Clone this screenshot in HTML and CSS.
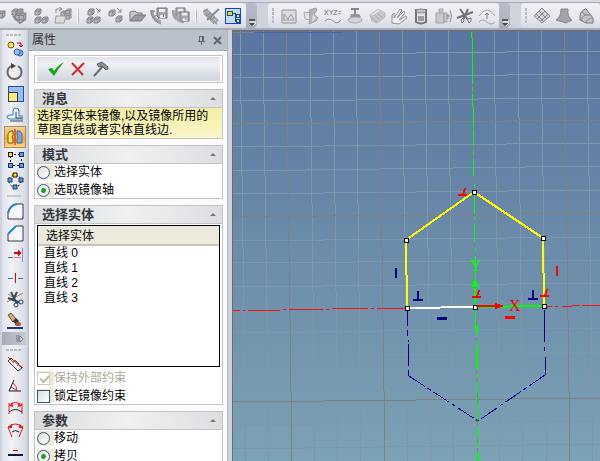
FILE: index.html
```html
<!DOCTYPE html>
<html lang="zh-CN">
<head>
<meta charset="utf-8">
<title>属性</title>
<link rel="stylesheet" href="styles.css">
</head>
<body>
<svg class="defs" aria-hidden="true">
  <symbol id="cube" viewBox="0 0 8 8"><path d="M1 3l2-2h4v4l-2 2H1z" fill="#b5b5ba" stroke="#858589"/><path d="M1 3h4v4M5 3l2-2" fill="none" stroke="#858589"/></symbol>
  <symbol id="disk" viewBox="0 0 12 12"><path d="M1 1h10v10H3L1 9z" fill="#a5a5aa" stroke="#77777c"/><path d="M3 2h6v3H3zM4 8h5v3H4z" fill="#ececf0"/><path d="M7 8h1v2H7z" fill="#77777c"/></symbol>
  <symbol id="more" viewBox="0 0 11 26"><path d="M3 17h6" stroke="#55585f" stroke-width="2"/><path d="M4 19h6" stroke="#fff"/><path d="M3 20h6l-3 3z" fill="#44474e"/><path d="M7 23l3-3" stroke="#fff"/></symbol>
</svg>

<header class="topbar">
  <div class="group group-first">
    <button aria-label="装配"><svg viewBox="0 0 18 18"><use href="#cube" x="9" y="3" width="9" height="9"/></svg></button>
    <button aria-label="零件组"><svg viewBox="0 0 18 18"><use href="#cube" x="1" y="1" width="8" height="8"/><use href="#cube" x="6" y="1" width="8" height="8"/><use href="#cube" x="4" y="5" width="9" height="9"/><use href="#cube" x="8" y="5" width="9" height="9"/><path d="M3 9l7 7 6-4" fill="none" stroke="#89898e" stroke-width="2"/></svg></button>
    <button aria-label="结构"><svg viewBox="0 0 18 18"><use href="#cube" x="2" y="1" width="8" height="8"/><use href="#cube" x="2" y="9" width="8" height="8"/><use href="#cube" x="9" y="9" width="8" height="8"/></svg></button>
    <button aria-label="插入零件"><svg viewBox="0 0 18 18"><use href="#cube" x="6" y="3" width="7" height="7"/><use href="#cube" x="11" y="1" width="7" height="7"/><use href="#cube" x="11" y="6" width="7" height="7"/><path d="M2 9h10l-2 7H1z" fill="#ddd" stroke="#9b9ba0"/><path d="M2 6V2h5M5 0l3 2-3 2" fill="none" stroke="#8b8b90"/></svg></button>
    <span class="sep"></span>
    <button aria-label="替换零件"><svg viewBox="0 0 18 18"><use href="#cube" x="3" y="1" width="8" height="8"/><use href="#cube" x="2" y="9" width="8" height="8"/><use href="#cube" x="9" y="9" width="8" height="8"/><path d="M12 1l4 4M16 2v3h-3" fill="none" stroke="#88888d"/></svg></button>
    <button aria-label="移动零件"><svg viewBox="0 0 18 18"><use href="#cube" x="2" y="2" width="8" height="8"/><use href="#cube" x="9" y="8" width="8" height="8"/><path d="M11 1l4 4M15 2v3h-3" fill="none" stroke="#88888d"/></svg></button>
    <button aria-label="打开"><svg viewBox="0 0 18 18"><path d="M2 14V5l5-1 2 2h5v3" fill="#c9c9ce" stroke="#77777c"/><path d="M2 14l5-6h11l-5 6z" fill="#9a9a9f" stroke="#77777c"/></svg></button>
    <button aria-label="保存零件"><svg viewBox="0 0 18 18"><path d="M2 3c0 7 3 11 9 12" fill="none" stroke="#a3a3a8" stroke-width="3"/><path d="M1 6l4-2M3 10l4-2M6 14l3-3M1 3v4l4 7 6 3" fill="none" stroke="#85858a"/><use href="#disk" x="6" y="0" width="12" height="12"/></svg></button>
    <button aria-label="全部保存"><svg viewBox="0 0 18 18"><path d="M1 3c0 7 4 11 11 12" fill="none" stroke="#a3a3a8" stroke-width="3"/><use href="#disk" x="3" y="0" width="11" height="11"/><use href="#disk" x="7" y="4" width="11" height="11"/></svg></button>
    <span class="sep"></span>
    <button aria-label="取消链接"><svg viewBox="0 0 18 18"><path d="M2 3l13 14M2 6l10 10M4 2l12 12" stroke="#a3a3a8" stroke-width="2"/><path d="M17 2L5 13" stroke="#8b8b90" stroke-width="2"/><path d="M1 5l5-3M4 9l5-3M8 13l5-3M11 17l5-4" stroke="#88888d"/></svg></button>
    <button aria-label="结构树" aria-pressed="true"><svg viewBox="0 0 18 18" shape-rendering="crispEdges"><path d="M1 1h16v16H1z" fill="#1646bd"/><path d="M2 2h14v14H2z" fill="#c0dcfb"/><path d="M3 4h5v4H3z" fill="#ffd400" stroke="#164a96"/><path d="M8 6h3v8h2M11 8h2" fill="none" stroke="#164a96"/><path d="M12 7h3v3h-3zM12 12h3v3h-3z" fill="#ffe84a" stroke="#164a96"/></svg></button>
  </div>
  <button class="cap" aria-label="更多"><svg viewBox="0 0 11 26"><use href="#more"/></svg></button>
  <div class="group group-spaced">
    <span class="grip"></span>
    <button aria-label="草图"><svg viewBox="0 0 18 18"><path d="M2 3h14v13H2z" fill="#dcdce0" stroke="#929297"/><path d="M4 14V7l4 5 3-5 3 6M4 13h10" fill="none" stroke="#99999e"/></svg></button>
    <button aria-label="曲面"><svg viewBox="0 0 18 18"><path d="M2 5l6 1v7l-5-1z" fill="#e4e4e7" stroke="#ababb0"/><path d="M7 3l7-2 1 2-3 4 4 4-2 3-7 3 1-6z" fill="#b3b3b8" stroke="#a3a3a8"/><path d="M11 7l3 4-4 4z" fill="#dedee2"/></svg></button>
    <button class="xyz" aria-label="公式曲线"><svg viewBox="0 0 18 18"><text x="0" y="8">XYZ=</text><path d="M1 14q4-4 8 0t8-1" fill="none" stroke="#929297"/></svg></button>
    <button aria-label="拉伸"><svg viewBox="0 0 18 18"><path d="M5 2h8M9 2v7" stroke="#85858a" stroke-width="2"/><path d="M5 7h8l2 3H4z" fill="#929297"/><ellipse cx="9" cy="13" rx="7" ry="3" fill="#d3d3d7" stroke="#a5a5aa"/></svg></button>
    <button aria-label="圆角"><svg viewBox="0 0 18 18"><path d="M2 8l8-6 7 4v4l-8 6-5-2z" fill="#c9c9cd" stroke="#b5b5b9"/><path d="M4 6l8 7M7 4l8 7M2 9l7 6" stroke="#aaaaae"/><path d="M4 8l7-5" stroke="#e5e5e7" stroke-width="2"/></svg></button>
    <button aria-label="扫描"><svg viewBox="0 0 18 18"><path d="M2 16V8l2-2v5l6-9 2 1-5 8 7-7 1 2-6 7 7-4 1 2-8 6z" fill="#ededf0" stroke="#929297"/></svg></button>
    <button aria-label="放样"><svg viewBox="0 0 18 18"><path d="M4 3v12q5 3 10 0V3z" fill="#e2e2e6" stroke="#737378" stroke-width="2"/><ellipse cx="9" cy="4" rx="5" ry="2" fill="#bfbfc4" stroke="#8b8b90"/><path d="M6 9h6v5H6z" fill="#9b9ba0"/></svg></button>
    <button aria-label="旋转"><svg viewBox="0 0 18 18"><path d="M5 2h4v3H5zM2 6h8v10H2zM10 6h3v9h-3z" fill="#c7c7cc" stroke="#a3a3a8"/><path d="M13 9h3M14 7v5M16 3q3 6 0 12" fill="none" stroke="#88888d"/></svg></button>
    <button aria-label="裁剪"><svg viewBox="0 0 18 18"><path d="M4 2l8 11M12 2L7 13M1 11l16-6" fill="none" stroke="#727277" stroke-width="2"/><path d="M5 13l2-2 1 3-2 2zM11 12l4-1v3l-2 2z" fill="#ddd" stroke="#77777c"/></svg></button>
    <button aria-label="投影"><svg viewBox="0 0 18 18"><path d="M1 9q8-12 16 0M1 15q4-4 8 0t8 0" fill="none" stroke="#a3a3a8"/><path d="M9 12V6M7 8l2-2 2 2" fill="none" stroke="#7d7d82"/></svg></button>
  </div>
  <button class="cap" aria-label="更多"><svg viewBox="0 0 11 26"><use href="#more"/></svg></button>
  <div class="group group-spaced group-last">
    <span class="grip"></span>
    <button aria-label="网格面"><svg viewBox="0 0 18 18"><path d="M9 1l8 8-8 7-8-7z" fill="#d4d4d6" stroke="#88888b"/><path d="M6 4l8 8M3 7l8 8M12 4l-8 8M15 7l-8 8" stroke="#848488"/></svg></button>
    <button aria-label="放样面"><svg viewBox="0 0 18 18"><path d="M6 2h7q-1 8 4 11l-6 3-10-3q5-3 5-11z" fill="#a2a2a7" stroke="#85858a"/></svg></button>
    <button aria-label="扫描面"><svg viewBox="0 0 18 18"><path d="M3 9q1-6 6-7l7 9v5H9L3 13z" fill="#c3c3c7" stroke="#78787d"/><path d="M4 13Q6 7 13 8M9 16q1-5 7-5M5 5l4 3" fill="none" stroke="#818186"/></svg></button>
  </div>
</header>

<div class="workspace">
  <nav class="sidebar" aria-label="草图工具">
    <span class="grip-h"></span>
    <button aria-label="平移"><svg viewBox="0 0 18 18"><circle cx="5" cy="5" r="3" fill="#ffe73d" stroke="#625b28"/><path d="M11 3h4v4M13 5l2 2 2-2" fill="none" stroke="#c00000"/><circle cx="14" cy="13" r="3" fill="#7ba7e5" stroke="#3c669e"/><circle cx="11" cy="12" r="3" fill="#91bdf0" stroke="#3c669e"/></svg></button>
    <button aria-label="旋转"><svg viewBox="0 0 18 18"><path d="M5 4a7 7 0 1 0 7 0" fill="none" stroke="#6a6a6d" stroke-width="2"/><path d="M5 1l5 3-5 3z" fill="#444"/></svg></button>
    <button aria-label="缩放"><svg viewBox="0 0 18 18" shape-rendering="crispEdges"><path d="M2 2h15v15H2z" fill="#9cbcf5" stroke="#244da5"/><path d="M2 8h9v9H2z" fill="#ffeb69" stroke="#243b71"/></svg></button>
    <button aria-label="等距"><svg viewBox="0 0 18 18"><path d="M17 13H4q-3 0-3-2t3-2h3V5q0-3 3-3t3 3v5h4" fill="none" stroke="#2382b4"/><path d="M17 15H4M17 12H10V6" fill="none" stroke="#3c444b"/></svg></button>
    <button class="active" aria-label="镜像" aria-pressed="true"><svg viewBox="0 0 18 18"><path d="M2 15V6l2-3h3v4q-2 2 0 4v4z" fill="#ffe94a" stroke="#6d581d"/><path d="M16 15V6l-2-3h-3v4q2 2 0 4v4z" fill="#75a9df" stroke="#416b9a"/><path d="M9 1v16" stroke="#e00000"/></svg></button>
    <button aria-label="线性阵列"><svg viewBox="0 0 18 18" shape-rendering="crispEdges"><path d="M4 4h11v11H4z" fill="none" stroke="#111" stroke-dasharray="2 2"/><path d="M2 2h4v4H2z" fill="#ffe000" stroke="#111"/><path d="M13 2h4v4h-4zM2 13h4v4H2zM13 13h4v4h-4z" fill="#5c9ce5" stroke="#18365f"/></svg></button>
    <button aria-label="圆形阵列"><svg viewBox="0 0 18 18"><circle cx="9" cy="9" r="6" fill="none" stroke="#111" stroke-dasharray="2 2"/><path d="M7 1h4v4H7z" fill="#ffe000" stroke="#111"/><path d="M2 6h4v4H2zM13 6h4v4h-4zM7 13h4v4H7z" fill="#5c9ce5" stroke="#18365f"/></svg></button>
    <span class="rule"></span>
    <button aria-label="圆角过渡"><svg viewBox="0 0 18 18"><path d="M2 17v-6q2-8 9-9h6v15z" fill="#f5f6fa" stroke="#36393f"/><path d="M2 11q2-8 9-9" fill="none" stroke="#2181c1" stroke-width="2"/></svg></button>
    <button aria-label="倒角"><svg viewBox="0 0 18 18"><path d="M2 17v-7l8-8h7v15z" fill="#f5f6fa" stroke="#36393f"/><path d="M2 10l8-8" stroke="#2181c1" stroke-width="2"/></svg></button>
    <button aria-label="延伸"><svg viewBox="0 0 18 18" shape-rendering="crispEdges"><path d="M16 2v14" stroke="#8a80ee"/><path d="M2 11h5" stroke="#39709f"/><path d="M8 11h7" stroke="#dd7780"/><path d="M8 6h5v2H8z" fill="#e00000"/><path d="M12 4l4 3-4 3z" fill="#e00000"/></svg></button>
    <button aria-label="打断"><svg viewBox="0 0 18 18" shape-rendering="crispEdges"><path d="M2 10h5M12 10h5" stroke="#39709f"/><path d="M9 5h1v10H9z" fill="#e00000"/></svg></button>
    <button aria-label="裁剪"><svg viewBox="0 0 18 18"><path d="M1 12l16-9M2 4l4 3" stroke="#cb713b"/><path d="M5 2l6 12M11 2L7 10M2 8l13 5" stroke="#33475e" stroke-width="2"/><circle cx="10" cy="15" r="2" fill="#fff" stroke="#24384f"/><circle cx="15" cy="12" r="2" fill="#fff" stroke="#24384f"/></svg></button>
    <button aria-label="删除"><svg viewBox="0 0 18 18"><path d="M2 3l3-2 5 6-3 3z" fill="#e2ae76" stroke="#5b4432"/><path d="M7 9l3-3 3 3-3 4z" fill="#35323a"/><ellipse cx="12" cy="12" rx="3" ry="2" fill="#a9563a"/><path d="M1 16h16" stroke="#1d318f" stroke-width="2"/></svg></button>
    <button class="side-cap" aria-label="更多工具"><svg viewBox="0 0 18 13"><path d="M12 3v7M14 3v7" stroke="#72767d"/><path d="M15 4l3 3-3 3z" fill="#fff" stroke="#777"/></svg></button>
    <span class="grip-h"></span>
    <button aria-label="智能标注"><svg viewBox="0 0 18 18"><path d="M2 6l3-3 11 10-4 3z" fill="#f1f1f5" stroke="#333"/><path d="M2 2l6 6M7 8l2-3 4 4-2 2M12 9l5 4" fill="none" stroke="#e82020"/></svg></button>
    <button aria-label="角度"><svg viewBox="0 0 18 18"><path d="M8 3L3 14h12" fill="none" stroke="#16162f"/><path d="M7 6q4 3 4 8M5 10l5 3" fill="none" stroke="#e02020"/></svg></button>
    <button aria-label="弧长"><svg viewBox="0 0 18 18"><path d="M3 4v11M16 4v11M3 6q6-5 13 0" fill="none" stroke="#f01818"/><path d="M3 13q6-5 13 0" fill="none" stroke="#222"/><path d="M3 7l4-3v4zM16 7l-4-3v4z" fill="#f01818"/></svg></button>
    <button aria-label="弧度"><svg viewBox="0 0 18 18"><path d="M2 6q7-6 15 0M2 6l4 10M17 6l-4 10" fill="none" stroke="#e01818"/><path d="M6 11q3-3 7 0" fill="none" stroke="#222"/><path d="M2 7l4-4v4zM17 7l-4-4v4z" fill="#e01818"/></svg></button>
    <button aria-label="水平"><svg viewBox="0 0 18 18" shape-rendering="crispEdges"><path d="M7 7h5v1H7z" fill="#e00000"/><path d="M2 11h15v2H2z" fill="#14143c"/></svg></button>
  </nav>

  <aside class="panel">
    <div class="panel-title">
      <h1>属性</h1>
      <button aria-label="固定"><svg viewBox="0 0 9 9" shape-rendering="crispEdges"><path d="M2 0h5v5h1v1H1V5h1zM3 1v4h2V1zM4 6h1v3H4z" fill="#63666c" fill-rule="evenodd"/></svg></button>
      <button aria-label="关闭"><svg viewBox="0 0 9 9"><path d="M1 1l7 7M8 1L1 8" stroke="#63666c" stroke-width="2"/></svg></button>
    </div>
    <div class="panel-body">
      <div class="box actions">
        <div class="actions-inner">
          <button aria-label="确定"><svg viewBox="0 0 18 18"><path d="M1 9l4-1 2 3Q11 5 17 2 11 9 7 16z" fill="#12a818"/></svg></button>
          <button aria-label="取消"><svg viewBox="0 0 18 18"><path d="M3 3l11 12M15 3L3 15" stroke="#d12c31" stroke-width="2"/></svg></button>
          <button aria-label="应用"><svg viewBox="0 0 18 18"><path d="M3 16L12 6" stroke="#696b70" stroke-width="2"/><path d="M6 4l5-2 6 5v2l-2 1-4-4-3 1z" fill="#8c8f94" stroke="#606268"/></svg></button>
        </div>
      </div>

      <section class="box">
        <h2>消息<i class="fold"></i></h2>
        <p class="message">选择实体来镜像,以及镜像所用的草图直线或者实体直线边.</p>
      </section>

      <section class="box">
        <h2>模式<i class="fold"></i></h2>
        <div class="options">
          <label><span class="tick"><input type="radio" name="mode"></span>选择实体</label>
          <label><span class="tick"><input type="radio" name="mode" checked></span>选取镜像轴</label>
        </div>
      </section>

      <section class="box">
        <h2>选择实体<i class="fold"></i></h2>
        <div class="list">
          <table>
            <thead><tr><th scope="col">选择实体</th></tr></thead>
            <tbody>
              <tr><td>直线 0</td></tr>
              <tr><td>直线 1</td></tr>
              <tr><td>直线 2</td></tr>
              <tr><td>直线 3</td></tr>
            </tbody>
          </table>
        </div>
        <div class="options">
          <label class="off"><span class="tick"><input type="checkbox" checked disabled></span>保持外部约束</label>
          <label><span class="tick"><input type="checkbox"></span>锁定镜像约束</label>
        </div>
      </section>

      <section class="box">
        <h2>参数<i class="fold"></i></h2>
        <div class="options">
          <label><span class="tick"><input type="radio" name="op"></span>移动</label>
          <label><span class="tick"><input type="radio" name="op" checked></span>拷贝</label>
        </div>
      </section>
    </div>
  </aside>

  <main class="canvas">
    <svg viewBox="233 31 367 430" preserveAspectRatio="xMinYMin slice" shape-rendering="crispEdges">
      <g class="minor">
        <line x1="240" y1="31" x2="246" y2="461"/>
        <line x1="263" y1="31" x2="269" y2="461"/>
        <line x1="310" y1="31" x2="315" y2="461"/>
        <line x1="333" y1="31" x2="338" y2="461"/>
        <line x1="356" y1="31" x2="361" y2="461"/>
        <line x1="402" y1="31" x2="408" y2="461"/>
        <line x1="425" y1="31" x2="431" y2="461"/>
        <line x1="448" y1="31" x2="454" y2="461"/>
        <line x1="494" y1="31" x2="500" y2="461"/>
        <line x1="518" y1="31" x2="523" y2="461"/>
        <line x1="541" y1="31" x2="547" y2="461"/>
        <line x1="587" y1="31" x2="593" y2="461"/>
        <line x1="233" y1="55" x2="600" y2="51"/>
        <line x1="233" y1="78" x2="600" y2="74"/>
        <line x1="233" y1="101" x2="600" y2="98"/>
        <line x1="233" y1="147" x2="600" y2="143"/>
        <line x1="233" y1="171" x2="600" y2="166"/>
        <line x1="233" y1="194" x2="600" y2="190"/>
        <line x1="233" y1="241" x2="600" y2="237"/>
        <line x1="233" y1="263" x2="600" y2="260"/>
        <line x1="233" y1="287" x2="600" y2="283"/>
        <line x1="233" y1="333" x2="600" y2="328"/>
        <line x1="233" y1="357" x2="600" y2="352"/>
        <line x1="233" y1="379" x2="600" y2="375"/>
        <line x1="233" y1="425" x2="600" y2="421"/>
        <line x1="233" y1="449" x2="600" y2="444"/>
      </g>
      <g class="major">
        <line x1="286" y1="31" x2="292" y2="461"/>
        <line x1="379" y1="31" x2="385" y2="461"/>
        <line x1="472" y1="31" x2="478" y2="461"/>
        <line x1="564" y1="31" x2="570" y2="461"/>
        <line x1="233" y1="32" x2="254" y2="32"/>
        <line x1="233" y1="124" x2="600" y2="120"/>
        <line x1="233" y1="217" x2="600" y2="213"/>
        <line x1="233" y1="402" x2="600" y2="398"/>
      </g>
      <path fill="none" stroke="#5260a8" d="M254 32H342"/>
      <path fill="none" stroke="#ff1010" d="M233 310H240M243 310H245M248 310H280M283 309H286M289 309H323M326 309H329M332 308H368M371 308H374M377 308H407M545 306H552M555 306H558M562 306H572M572 305H580M582 305H600"/>
      <g fill="#00ff00">
        <path d="M471 32h1v6h-1zM472 38h1v11h-1zM472 50h1v34h-1zM472 87h1v4h-1zM472 94h1v13h-1zM473 107h1v21h-1zM473 129h1v17h-1zM473 151h1v4h-1zM473 159h1v17h-1zM474 184h1v4h-1zM474 195h1v19h-1zM474 217h1v3h-1zM474 224h1v18h-1zM475 248h1v4h-1zM475 256h1v22h-1z"/>
        <path d="M475 309h1v21h-1zM476 333h1v4h-1zM476 341h1v8h-1zM476 349h1v21h-1zM476 374h1v4h-1zM476 382h1v22h-1zM477 404h1v18h-1zM477 426h1v13h-1zM477 443h1v5h-1z"/>
        <path d="M476 325h2v8h-2zM476 349h2v20h-2zM477 452h2v9h-2z"/>
      </g>
      <path fill="#000080" d="M407 310h1v16h-1zM407 330h1v6h-1zM408 344h1v22h-1zM408 340h1v2h-1zM408 370h1v6h-1zM544 310h1v32h-1zM544 347h1v4h-1zM545 357h1v18h-1z"/>
      <path fill="none" stroke="#000080" stroke-dasharray="19 3 4 3" d="M409 376L478 421M545 375L478 421"/>
      <path fill="none" stroke="#ffff00" stroke-width="2" d="M407 308L406 240L474 192L543 238L544 306"/>
      <path stroke="#fff" stroke-width="2" d="M408 308L475 307"/>
      <path stroke="#00ff00" stroke-width="2" d="M476 307L543 306M475 288V306"/>
      <g fill="#fff" stroke="#000">
        <path d="M404 238h4v4h-4zM472 190h4v4h-4zM541 236h4v4h-4zM405 306h4v4h-4zM473 305h4v4h-4zM542 304h4v4h-4z"/>
      </g>
      <path d="M475 278l4 9h-8z" fill="#00ff00"/>
      <path d="M476 305h19v-2l9 3-9 3v-2h-19z" fill="#f00"/>
      <g fill="none" stroke="#000080" stroke-width="2">
        <path d="M396 268v10M413 300h10M418 291v9M528 299h10M533 290v9"/><path d="M437 318h10" stroke-width="3"/>
      </g>
      <g fill="none" stroke="#f00" stroke-width="2">
        <path d="M557 266v10M458 195h9M463 195l2-7M472 297h9M477 297l2-7M540 296h9M545 296l2-7"/><path d="M505 317h10" stroke-width="3"/>
      </g>
      <text class="axis axis-x" x="509" y="311">X</text>
      <text class="axis axis-y" x="470" y="271">Y</text>
    </svg>
  </main>
</div>
</body>
</html>
```

FILE: styles.css
```css
* { box-sizing: border-box; }

body {
  margin: 0;
  height: 100vh;
  overflow: hidden;
  display: flex;
  flex-direction: column;
  background: #ced3dd;
  color: #000;
  font: 12px/15px "Liberation Sans", "Noto Sans CJK SC", sans-serif;
}

button {
  display: flex;
  align-items: center;
  justify-content: center;
  flex: none;
  margin: 0;
  padding: 0;
  border: 0;
  background: none;
}

svg { display: block; }
.defs { display: none; }

/* top toolbar */
.topbar {
  display: flex;
  flex: none;
  height: 30px;
  padding: 3px 0 1px;
  background: linear-gradient(#d6dae2 2px, #a9acb6 2px, #a9acb6 3px, #ced3dd 3px, #ced3dd 28px, #a9acb4 28px);
}
.group {
  display: flex;
  flex: none;
  height: 25px;
  border-radius: 0 4px 4px 0;
  background: linear-gradient(#f2f2f7, #e6e8ef 60%, #d5d9e2);
}
.group button { width: 22px; height: 25px; }
.group svg { width: 18px; height: 18px; }
.group-first { margin-left: -14px; padding-right: 2px; }
.group-spaced { margin-left: 11px; border-radius: 4px; padding-right: 1px; }
.group-last { flex: 1; }
.sep {
  width: 2px;
  height: 14px;
  margin: 6px 3px;
  border-left: 1px solid #fff;
  border-right: 1px solid #b7bac4;
}
.grip {
  width: 2px;
  height: 16px;
  margin: 5px 4px;
  background: repeating-linear-gradient(#b6bcc8 0 3px, transparent 3px 4px);
}
.cap {
  width: 11px;
  height: 25px;
  border-radius: 0 4px 4px 0;
  background: linear-gradient(#b8bdc9, #a9aebb);
}
.cap svg { width: 11px; height: 26px; }
.xyz text { font: 7px "Liberation Sans", sans-serif; fill: #66666b; }

.workspace { display: flex; flex: 1; min-height: 0; }

/* drawing tools */
.sidebar {
  display: flex;
  flex-direction: column;
  flex: none;
  width: 24px;
  margin: 0 2px 0 2px;
  padding-top: 2px;
  overflow: hidden;
  background: linear-gradient(90deg, #dfe3ec, #f1f2f7 40%, #d8dce6);
}
.sidebar button { height: 22px; margin-left: 2px; }
.sidebar svg { width: 18px; height: 18px; }
.sidebar .active {
  border: 1px solid #b2894e;
  background: linear-gradient(#f8cf99, #f7a64c 60%, #fcd58a);
}
.grip-h {
  flex: none;
  width: 16px;
  height: 2px;
  margin: 2px auto;
  background: repeating-linear-gradient(90deg, #b6bcc8 0 3px, transparent 3px 4px);
}
.rule { flex: none; width: 14px; height: 2px; margin: 3px auto; background: #c3c7d0; }
.sidebar .side-cap {
  height: 13px;
  margin: 0 0 2px;
  background: linear-gradient(90deg, #a7acb8, #c6cad4);
}
.sidebar .side-cap svg { height: 13px; }

/* property panel */
.panel {
  flex: none;
  display: flex;
  flex-direction: column;
  width: 200px;
  margin-right: 4px;
  border: 1px solid #b1b5c0;
  border-width: 0 1px;
  background: #fbfbfd;
}
.panel-title {
  display: flex;
  align-items: center;
  flex: none;
  height: 21px;
  padding: 0 5px 0 3px;
  gap: 7px;
  border-bottom: 1px solid #a7adb6;
  background: #b9c1cb;
}
.panel-title h1 { flex: 1; margin: 0; font-size: 12px; font-weight: 400; line-height: 20px; color: #303238; }
.panel-title svg { width: 9px; height: 9px; }
.panel-body {
  display: flex;
  flex-direction: column;
  gap: 6px;
  padding: 4px 4px 0 5px;
  overflow: hidden;
}
.box { flex: none; border: 1px solid #c3c4c6; background: #fff; }
.actions { padding: 1px 2px; }
.actions-inner {
  display: flex;
  gap: 4px;
  height: 24px;
  padding-left: 10px;
  background: linear-gradient(#dfe2ea, #f0f1f5 25%, #cfd4dd);
}
.actions svg { width: 18px; height: 18px; }
h2 {
  display: flex;
  align-items: center;
  justify-content: space-between;
  height: 18px;
  margin: 0;
  padding: 0 6px 0 7px;
  border-bottom: 1px solid #c3c4c6;
  background: linear-gradient(90deg, #d9dcdf, #eff0f2 50%, #dcdfe2);
  font-size: 13px;
  line-height: 17px;
  color: #33363b;
}
.fold { border: 3px solid transparent; border-top: 0; border-bottom-color: #777; }
.message {
  margin: 0;
  padding: 1px 12px 1px 2px;
  background: linear-gradient(#f3eda6, #fbf6c8);
  line-height: 14px;
}
.options { display: flex; flex-direction: column; gap: 2px; padding: 0 2px; }
.options label { display: flex; align-items: center; height: 16px; }
.tick { display: flex; align-items: center; width: 17px; height: 14px; background: #ece9d8; }
.off { color: #aca899; }
input {
  appearance: none;
  width: 13px;
  height: 13px;
  margin: 0;
  border: 1px solid #2e5a86;
  background: linear-gradient(135deg, #dcdcd7, #fff);
}
input[type="radio"] { border-radius: 50%; }
input[type="radio"]:checked {
  background: radial-gradient(circle, #21a121 2px, #f6f6f4 3px);
}
input:disabled { border-color: #cac8bb; background: #fff; }
input:disabled::before {
  content: "";
  display: block;
  width: 7px;
  height: 4px;
  margin: 2px;
  border: 2px solid #bdbaac;
  border-width: 0 0 2px 2px;
  transform: rotate(-45deg);
}
.list { height: 142px; margin: 1px 2px 3px; border: 1px solid #000; }
table { width: 100%; border-spacing: 0; }
th {
  height: 20px;
  padding: 2px 0 0 8px;
  border-bottom: 2px solid #cbc7b8;
  background: #ebeadb;
  font-weight: 400;
  text-align: left;
}
td { padding: 0 0 0 6px; height: 15px; }

/* sketch area */
.canvas {
  flex: 1;
  min-width: 0;
  border: 1px solid #716d64;
  border-width: 1px 0 0 1px;
  background: linear-gradient(#5a759f, #7ca2b5);
}
.canvas svg { width: 100%; height: 100%; }
.minor { stroke: #8096aa; }
.major { stroke: #827f80; }
.axis { font: 16px "Liberation Serif", serif; }
.axis-x { fill: #f00; }
.axis-y { fill: #0f0; }
```
